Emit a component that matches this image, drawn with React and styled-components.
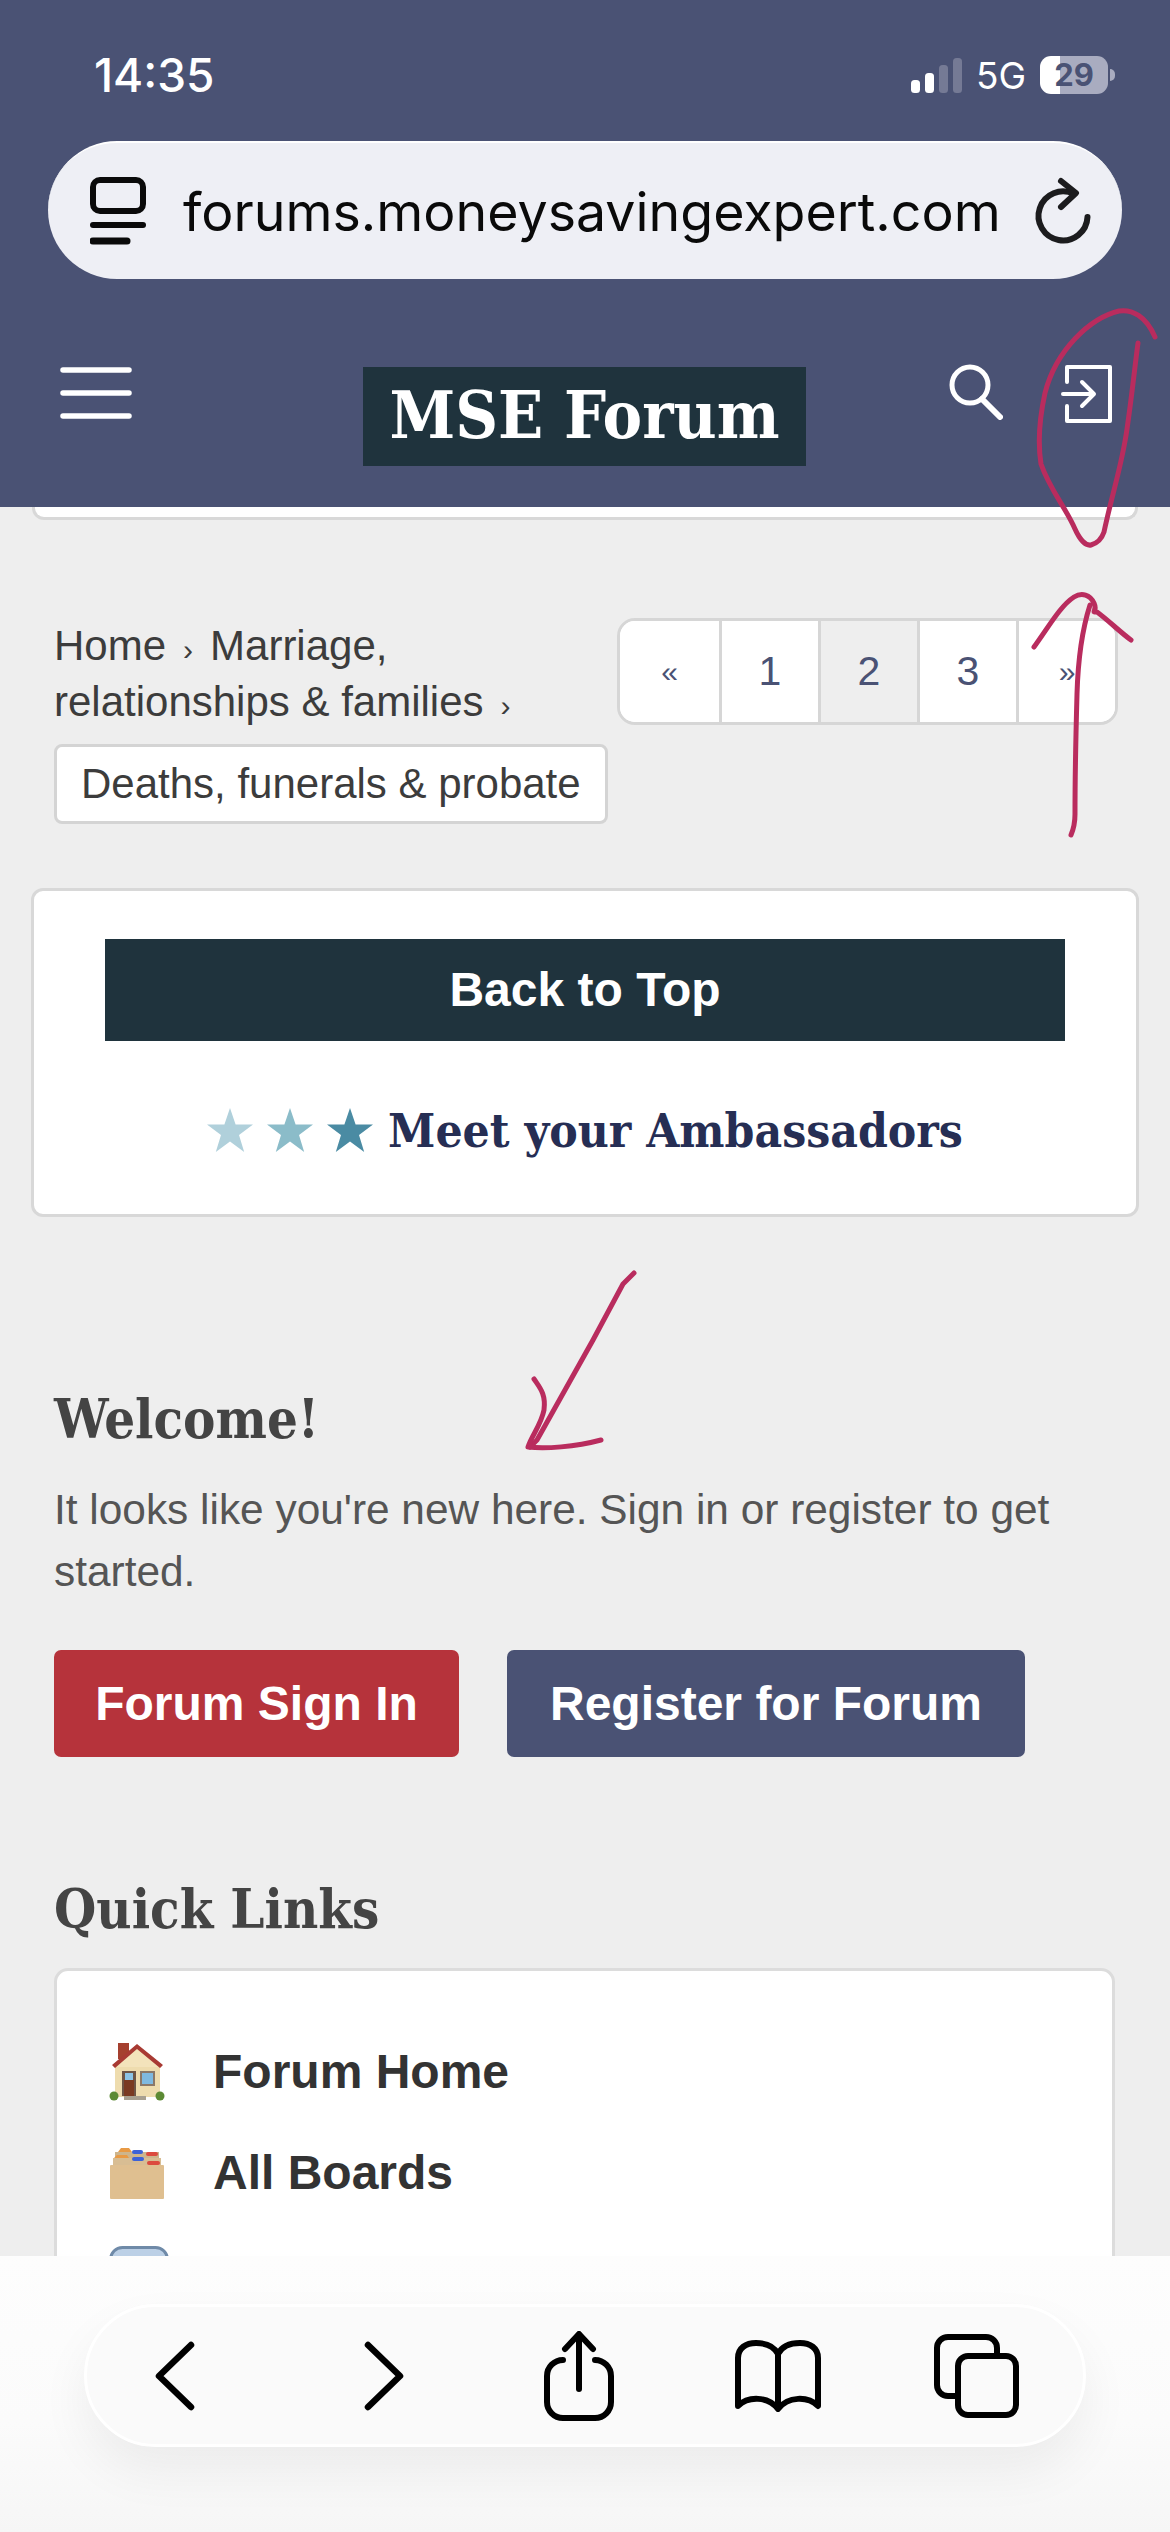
import React from 'react';
import styled, { createGlobalStyle } from 'styled-components';

const sans = '"Liberation Sans", Arial, sans-serif';
const slab = '"DejaVu Serif Condensed", "DejaVu Serif", serif';
const ui = 'Inter, "Liberation Sans", sans-serif';

const GlobalStyle = createGlobalStyle`
  html, body {
    margin: 0;
    padding: 0;
    background: #eeeeee;
  }
`;

const Page = styled.div`
  position: relative;
  width: 1170px;
  height: 2532px;
  overflow: hidden;
  background: #eeeeee;
  font-family: ${sans};
`;

// Faixa azul do topo
const TopBand = styled.header`
  height: 507px;
  background: #4a5274;
  display: flex;
  flex-direction: column;
`;

const StatusBar = styled.div`
  height: 141px;
  box-sizing: border-box;
  padding: 45px 55px 0 94px;
  display: flex;
  justify-content: space-between;
  align-items: flex-start;
  color: #fff;
`;

const Clock = styled.span`
  font-family: ${ui};
  font-size: 46px;
  font-weight: 500;
  line-height: 60px;
`;

const StatusRight = styled.div`
  display: flex;
  align-items: center;
  height: 60px;
`;

const NetLabel = styled.span`
  font-family: ${ui};
  font-size: 37px;
  margin: 0 14px;
`;

const Battery = styled.div`
  width: 68px;
  height: 38px;
  border-radius: 11px;
  overflow: hidden;
  background: linear-gradient(90deg, #fff 0 29%, #a9acc0 29% 100%);
  color: #4a5274;
  font-family: ${ui};
  font-size: 31px;
  font-weight: 700;
  line-height: 38px;
  text-align: center;
`;

const BatteryNub = styled.div`
  width: 5px;
  height: 12px;
  margin-left: 2px;
  border-radius: 0 5px 5px 0;
  background: #a9acc0;
`;

const UrlBar = styled.div`
  width: 1074px;
  height: 138px;
  margin-left: 48px;
  box-sizing: border-box;
  padding: 0 29px 0 42px;
  border-radius: 69px;
  background: #eeeff5;
  border-top: 2px solid #fff;
  display: flex;
  align-items: center;
`;

const UrlText = styled.span`
  flex: 1;
  margin-left: 37px;
  font-family: ${ui};
  font-size: 53.7px;
  color: #0a0a0a;
  white-space: nowrap;
`;

const NavBar = styled.nav`
  flex: 1;
  display: flex;
  align-items: flex-start;
  padding: 85px 0 0 60px;
`;

const Logo = styled.div`
  flex: none;
  width: 443px;
  height: 99px;
  margin: 3px 0 0 231px;
  background: #1f333d;
  color: #fff;
  font-family: ${slab};
  font-size: 66px;
  font-weight: 700;
  line-height: 96px;
  text-align: center;
`;

const NavActions = styled.div`
  margin-left: 143px;
  display: flex;
  align-items: flex-start;
  gap: 58px;
`;

const CardEdge = styled.div`
  width: 1106px;
  height: 13px;
  margin-left: 32px;
  box-sizing: border-box;
  background: #fff;
  border: 3px solid #d8d8d8;
  border-top: 0;
  border-radius: 0 0 12px 12px;
`;

const CrumbRow = styled.section`
  margin: 98px 52px 0 54px;
  display: flex;
  justify-content: space-between;
  align-items: flex-start;
`;

const Crumbs = styled.div`
  width: 560px;
  font-size: 42px;
  line-height: 56px;
  color: #3c3c3c;
`;

const CrumbLine = styled.div`
  white-space: nowrap;
`;

const Sep = styled.span`
  font-size: 30px;
  line-height: 1;
  margin: 0 17px;
`;

const Chip = styled.div`
  width: fit-content;
  margin-top: 14px;
  padding: 0 24px;
  height: 80px;
  box-sizing: border-box;
  line-height: 74px;
  background: #fff;
  border: 3px solid #d4d4d4;
  border-radius: 8px;
  white-space: nowrap;
`;

const Pager = styled.div`
  display: flex;
  height: 107px;
  box-sizing: border-box;
  border: 3px solid #d6d6d6;
  border-radius: 18px;
  overflow: hidden;
  background: #fff;
`;

const PageCell = styled.div`
  width: 99px;
  display: flex;
  align-items: center;
  justify-content: center;
  box-sizing: border-box;
  border-left: ${(p) => (p.$first ? '0' : '3px solid #d6d6d6')};
  background: ${(p) => (p.$current ? '#eeeeee' : '#fff')};
  color: #4a5274;
  font-size: ${(p) => (p.$arrow ? '30px' : '41px')};
`;

const TopCard = styled.section`
  width: 1108px;
  height: 329px;
  margin: 64px 0 0 31px;
  box-sizing: border-box;
  padding: 48px 71px 0;
  background: #fff;
  border: 3px solid #d8d8d8;
  border-radius: 12px;
`;

const BackToTop = styled.div`
  height: 102px;
  background: #1f333d;
  color: #fff;
  font-size: 48px;
  font-weight: 700;
  line-height: 102px;
  text-align: center;
`;

const Ambassadors = styled.div`
  margin-top: 53px;
  height: 72px;
  display: flex;
  justify-content: center;
  align-items: center;
  gap: 14px;
`;

const AmbassadorLink = styled.span`
  margin-left: 1px;
  font-family: ${slab};
  font-size: 47.5px;
  font-weight: 700;
  color: #262e54;
  white-space: nowrap;
`;

const Block = styled.section`
  margin: ${(p) => p.$top}px 0 0 54px;
`;

const Heading = styled.h2`
  margin: 0;
  font-family: ${slab};
  font-size: 54px;
  font-weight: 700;
  line-height: 60px;
  color: #444;
`;

const Intro = styled.p`
  width: 1040px;
  margin: 30px 0 0;
  font-size: 42.4px;
  line-height: 62px;
  color: #555;
`;

const Buttons = styled.div`
  margin-top: 47px;
  display: flex;
  gap: 48px;
`;

const ActionButton = styled.div`
  width: ${(p) => p.$width}px;
  height: 107px;
  border-radius: 7px;
  background: ${(p) => p.$bg};
  color: #fff;
  font-size: 48px;
  font-weight: 700;
  line-height: 107px;
  text-align: center;
`;

const LinksCard = styled.div`
  width: 1061px;
  height: 500px;
  margin-top: 29px;
  box-sizing: border-box;
  padding-top: 50px;
  background: #fff;
  border: 3px solid #dcdcdc;
  border-radius: 14px;
`;

const LinkRow = styled.div`
  height: 101px;
  padding-left: 52px;
  display: flex;
  align-items: center;
  gap: 48px;
  font-size: 48px;
  font-weight: 700;
  color: #333;
`;

// Barra inferior do Safari, por cima da página
const BottomBar = styled.div`
  position: absolute;
  left: 0;
  right: 0;
  bottom: 0;
  height: 276px;
  box-sizing: border-box;
  padding: 48px 0 0 84px;
  background: linear-gradient(180deg, #fdfdfd 0%, #fbfbfb 60%, #f6f6f6 100%);
`;

const ToolPill = styled.div`
  width: 1002px;
  height: 143px;
  box-sizing: border-box;
  padding-left: 68px;
  display: flex;
  align-items: center;
  background: #fafafa;
  border: 3px solid #fff;
  border-radius: 72px;
  box-shadow: 0 24px 50px rgba(0, 0, 0, 0.06);
`;

const ToolCell = styled.div`
  display: flex;
  margin-left: ${(p) => p.$gap || 0}px;
`;

const Scribbles = styled.svg`
  position: absolute;
  left: 0;
  top: 0;
  pointer-events: none;
  fill: none;
  stroke: #b92c5e;
  stroke-width: 5;
  stroke-linecap: round;
  stroke-linejoin: round;
`;

const SignalIcon = () => (
  <svg width="51" height="35" viewBox="0 0 51 35">
    <rect x="0" y="22" width="9" height="13" rx="3.5" fill="#fff" />
    <rect x="14" y="15" width="9" height="20" rx="3.5" fill="#fff" />
    <rect x="28" y="7" width="9" height="28" rx="3.5" fill="#757a95" />
    <rect x="42" y="0" width="9" height="35" rx="3.5" fill="#757a95" />
  </svg>
);

const PageIcon = () => (
  <svg width="56" height="68" viewBox="0 0 56 68" fill="none" stroke="#0a0a0a" strokeWidth="6" strokeLinecap="round">
    <rect x="3" y="3" width="50" height="31" rx="7" />
    <path d="M3 48H53" />
    <path d="M3 64H37" strokeWidth="7" />
  </svg>
);

const ReloadIcon = () => (
  <svg width="62" height="70" viewBox="0 0 62 70" fill="none" stroke="#1c1c1e" strokeWidth="6" strokeLinecap="round" strokeLinejoin="round">
    <path d="M43 18A24.5 24.5 0 1 0 56.5 41" />
    <path d="M30 5L45 17L30 31" />
  </svg>
);

const MenuIcon = () => (
  <svg width="72" height="55" viewBox="0 0 72 55" fill="none" stroke="#fff" strokeWidth="5.5" strokeLinecap="round">
    <path d="M3 6H69" />
    <path d="M3 29H69" />
    <path d="M3 52H69" />
  </svg>
);

const SearchIcon = () => (
  <svg width="54" height="56" viewBox="0 0 54 56" fill="none" stroke="#fff" strokeWidth="5" strokeLinecap="round">
    <circle cx="21" cy="21" r="18" />
    <path d="M33 35L51 53" strokeWidth="6" />
  </svg>
);

const LoginIcon = () => (
  <svg width="52" height="60" viewBox="0 0 52 60" fill="none" stroke="#fff" strokeWidth="4" strokeLinecap="round" strokeLinejoin="round">
    <path d="M6 18V3H49V57H6V42" />
    <path d="M2 30H32" />
    <path d="M21 18L33 30L21 42" />
  </svg>
);

const Star = ({ color }) => (
  <svg width="46" height="44" viewBox="0 0 46 44">
    <path d="M23 0L28.6 16.6H46L32 27L37.2 44L23 33.6L8.8 44L14 27L0 16.6H17.4Z" fill={color} />
  </svg>
);

const HouseEmoji = () => (
  <svg width="56" height="58" viewBox="0 0 56 58">
    <rect x="9" y="0" width="11" height="16" fill="#a5402f" />
    <rect x="6" y="20" width="45" height="34" fill="#eedcae" />
    <path d="M28 4L5 24H51Z" fill="#f3e3bb" />
    <path d="M3 22L28 1L54 22L51 25L28 6L6 25Z" fill="#a83a33" />
    <rect x="13" y="28" width="14" height="25" fill="#6e5647" />
    <rect x="15" y="37" width="10" height="16" fill="#7a3a22" />
    <rect x="16" y="30" width="8" height="7" fill="#8cc4e6" />
    <rect x="31" y="28" width="15" height="15" fill="#8b7868" />
    <rect x="33" y="30" width="11" height="11" fill="#7fb9e0" />
    <rect x="15" y="53" width="22" height="4" fill="#a8a090" />
    <circle cx="5" cy="53" r="4.5" fill="#5c8a34" />
    <circle cx="51" cy="53" r="4.5" fill="#5c8a34" />
  </svg>
);

const BoxEmoji = () => (
  <svg width="56" height="52" viewBox="0 0 56 52">
    <rect x="6" y="5" width="44" height="14" fill="#cdb58d" />
    <path d="M9 5L12 1H20L23 5Z" fill="#e89a45" />
    <rect x="23" y="3" width="11" height="4" rx="2" fill="#3c62d8" />
    <rect x="37" y="5" width="12" height="4" rx="2" fill="#dc4a3e" />
    <rect x="4" y="11" width="48" height="8" fill="#d8bd93" />
    <path d="M5 11L8 8H18L20 11Z" fill="#e89a45" />
    <rect x="23" y="10" width="12" height="4" rx="2" fill="#3c62d8" />
    <rect x="38" y="14" width="13" height="4" rx="2" fill="#dc4a3e" />
    <rect x="1" y="18" width="54" height="34" rx="1" fill="#dfbf90" />
  </svg>
);

const CalendarEmoji = () => (
  <svg width="60" height="56" viewBox="0 0 60 56">
    <rect x="1.5" y="1.5" width="57" height="53" rx="12" fill="#bcd0e6" stroke="#6f8aa8" strokeWidth="3" />
  </svg>
);

const BackIcon = () => (
  <svg width="40" height="70" viewBox="0 0 40 70" fill="none" stroke="#000" strokeWidth="6.5" strokeLinecap="round" strokeLinejoin="round">
    <path d="M36 4L4 35L36 66" />
  </svg>
);

const ForwardIcon = () => (
  <svg width="40" height="70" viewBox="0 0 40 70" fill="none" stroke="#000" strokeWidth="6.5" strokeLinecap="round" strokeLinejoin="round">
    <path d="M4 4L36 35L4 66" />
  </svg>
);

const ShareIcon = () => (
  <svg width="70" height="90" viewBox="0 0 70 90" fill="none" stroke="#000" strokeWidth="6" strokeLinecap="round" strokeLinejoin="round">
    <path d="M19 29A16 16 0 0 0 3 45V71A16 16 0 0 0 19 87H51A16 16 0 0 0 67 71V45A16 16 0 0 0 51 29" />
    <path d="M35 4V58" />
    <path d="M21 18L35 3L49 18" />
  </svg>
);

const BookIcon = () => (
  <svg width="88" height="72" viewBox="0 0 88 72" fill="none" stroke="#000" strokeWidth="6" strokeLinejoin="round">
    <path d="M44 14C40 6 31 3 22 3C12 3 4 8 4 18V66C14 56 34 56 44 69C54 56 74 56 84 66V18C84 8 76 3 66 3C57 3 48 6 44 14Z" />
    <path d="M44 14V69" />
  </svg>
);

const TabsIcon = () => (
  <svg width="86" height="84" viewBox="0 0 86 84" fill="none" stroke="#000" strokeWidth="6" strokeLinejoin="round">
    <path d="M24 62H15A11 11 0 0 1 4 51V14A11 11 0 0 1 15 3H53A11 11 0 0 1 64 14V22" />
    <rect x="25" y="22" width="58" height="59" rx="10" />
  </svg>
);

const App = () => (
  <Page>
    <GlobalStyle />
    <TopBand>
      <StatusBar>
        <Clock>14:35</Clock>
        <StatusRight>
          <SignalIcon />
          <NetLabel>5G</NetLabel>
          <Battery>29</Battery>
          <BatteryNub />
        </StatusRight>
      </StatusBar>
      <UrlBar>
        <PageIcon />
        <UrlText>forums.moneysavingexpert.com</UrlText>
        <ReloadIcon />
      </UrlBar>
      <NavBar>
        <MenuIcon />
        <Logo>MSE Forum</Logo>
        <NavActions>
          <SearchIcon />
          <LoginIcon />
        </NavActions>
      </NavBar>
    </TopBand>
    <CardEdge />
    <CrumbRow>
      <Crumbs>
        <CrumbLine>Home<Sep>›</Sep>Marriage,</CrumbLine>
        <CrumbLine>relationships &amp; families<Sep>›</Sep></CrumbLine>
        <Chip>Deaths, funerals &amp; probate</Chip>
      </Crumbs>
      <Pager>
        <PageCell $first $arrow>«</PageCell>
        <PageCell>1</PageCell>
        <PageCell $current>2</PageCell>
        <PageCell>3</PageCell>
        <PageCell $arrow>»</PageCell>
      </Pager>
    </CrumbRow>
    <TopCard>
      <BackToTop>Back to Top</BackToTop>
      <Ambassadors>
        <Star color="#b0d0db" />
        <Star color="#8bbcc9" />
        <Star color="#4a8ba3" />
        <AmbassadorLink>Meet your Ambassadors</AmbassadorLink>
      </Ambassadors>
    </TopCard>
    <Block $top={172}>
      <Heading>Welcome!</Heading>
      <Intro>It looks like you're new here. Sign in or register to get started.</Intro>
      <Buttons>
        <ActionButton $width={405} $bg="#b6333b">Forum Sign In</ActionButton>
        <ActionButton $width={518} $bg="#4a5274">Register for Forum</ActionButton>
      </Buttons>
    </Block>
    <Block $top={122}>
      <Heading>Quick Links</Heading>
      <LinksCard>
        <LinkRow><HouseEmoji />Forum Home</LinkRow>
        <LinkRow><BoxEmoji />All Boards</LinkRow>
        <LinkRow><CalendarEmoji /></LinkRow>
      </LinksCard>
    </Block>
    <BottomBar>
      <ToolPill>
        <ToolCell><BackIcon /></ToolCell>
        <ToolCell $gap={169}><ForwardIcon /></ToolCell>
        <ToolCell $gap={140}><ShareIcon /></ToolCell>
        <ToolCell $gap={120}><BookIcon /></ToolCell>
        <ToolCell $gap={111}><TabsIcon /></ToolCell>
      </ToolPill>
    </BottomBar>
    <Scribbles width="1170" height="2532" viewBox="0 0 1170 2532">
      <path d="M1155 337C1146 316 1132 309 1119 311C1090 318 1056 350 1045 393C1038 425 1038 445 1041 464C1050 490 1066 508 1075 529C1080 540 1086 546 1091 545C1098 543 1102 538 1104 532C1113 490 1122 465 1127 429C1132 395 1135 365 1138 343" />
      <path d="M1071 835C1074 828 1075 820 1075 814C1075 770 1076 730 1077 694C1078 660 1082 630 1090 605" />
      <path d="M1034 647C1048 628 1060 606 1074 597C1082 592 1090 595 1094 603C1098 612 1090 612 1097 612C1108 620 1120 632 1131 640" />
      <path d="M634 1273L623 1284L593 1340L537 1440L530 1447" />
      <path d="M534 1379C540 1388 546 1394 544 1410C541 1425 532 1435 528 1447C545 1449 575 1447 601 1440" />
    </Scribbles>
  </Page>
);

export default App;
